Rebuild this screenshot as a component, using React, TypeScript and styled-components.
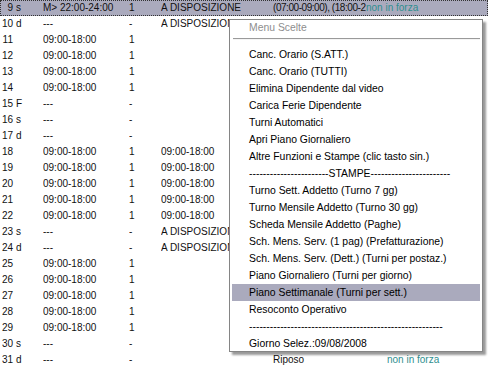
import styled, { createGlobalStyle } from "styled-components";

const Global = createGlobalStyle`
  html, body {
    margin: 0;
    padding: 0;
    background: #ffffff;
    overflow: hidden;
  }
  body {
    font-family: "Liberation Sans", Arial, sans-serif;
    font-size: 10px;
    color: #111111;
  }
`;

const Screen = styled.div`
  position: relative;
  width: 488px;
  height: 378px;
  overflow: hidden;
`;

const Table = styled.div`
  display: flex;
  flex-direction: column;
`;

const Row = styled.div<{ $selected?: boolean }>`
  display: grid;
  grid-template-columns: 41px 86px 32px 112px 93px 1fr;
  height: 16px;
  line-height: 16px;
  padding-left: 2px;
  box-sizing: border-box;
  background: ${(p) => (p.$selected ? "#aaaabd" : "transparent")};
  outline: ${(p) => (p.$selected ? "1px dotted #333" : "none")};
  outline-offset: -1px;
`;

const Cell = styled.div<{ $teal?: boolean; $indent?: number; $tight?: boolean }>`
  white-space: nowrap;
  overflow: hidden;
  min-width: 0;
  color: ${(p) => (p.$teal ? "#2f8f8f" : "inherit")};
  padding-left: ${(p) => p.$indent ?? 0}px;
  letter-spacing: ${(p) => (p.$tight ? "-0.45px" : "normal")};
`;

const DayNum = styled.span`
  display: inline-block;
  width: 11px;
  text-align: right;
`;

const DaySuffix = styled.span`
  margin-left: 3px;
`;

const Menu = styled.div`
  position: absolute;
  left: 229px;
  top: 19px;
  width: 254px;
  height: 333px;
  box-sizing: border-box;
  background: #ffffff;
  border: 1px solid #858585;
  box-shadow: 3px 3px 2px rgba(0, 0, 0, 0.4);
  display: flex;
  flex-direction: column;
  padding: 0 2px;
  font-size: 10.4px;
`;

const MenuTitle = styled.div`
  height: 15px;
  line-height: 15px;
  padding-left: 17px;
  color: #8e8e8e;
`;

const MenuRule = styled.div`
  height: 0;
  margin: 3px 0 6px 1px;
  border-top: 1px solid #9a9a9a;
  border-bottom: 1px solid #f4f4f4;
`;

const MenuItem = styled.div<{ $active?: boolean }>`
  height: 17px;
  line-height: 17px;
  padding-left: 17px;
  white-space: nowrap;
  color: #000000;
  background: ${(p) => (p.$active ? "#aaaabd" : "transparent")};
`;

type RowData = {
  n: string;
  s?: string;
  time: string;
  q: string;
  c4?: string;
  c5?: string;
  c6?: string;
  c6Indent?: number;
  sel?: boolean;
};

const rows: RowData[] = [
  { n: "9", s: "s", time: "M> 22:00-24:00", q: "1", c4: "A DISPOSIZIONE", c5: "(07:00-09:00), (18:00-2", c6: "non in forza", sel: true },
  { n: "10", s: "d", time: "---", q: "-", c4: "A DISPOSIZIONE" },
  { n: "11", time: "09:00-18:00", q: "1" },
  { n: "12", time: "09:00-18:00", q: "1" },
  { n: "13", time: "09:00-18:00", q: "1" },
  { n: "14", time: "09:00-18:00", q: "1" },
  { n: "15", s: "F", time: "---", q: "-" },
  { n: "16", s: "s", time: "---", q: "-" },
  { n: "17", s: "d", time: "---", q: "-" },
  { n: "18", time: "09:00-18:00", q: "1", c4: "09:00-18:00" },
  { n: "19", time: "09:00-18:00", q: "1", c4: "09:00-18:00" },
  { n: "20", time: "09:00-18:00", q: "1", c4: "09:00-18:00" },
  { n: "21", time: "09:00-18:00", q: "1", c4: "09:00-18:00" },
  { n: "22", time: "09:00-18:00", q: "1", c4: "09:00-18:00" },
  { n: "23", s: "s", time: "---", q: "-", c4: "A DISPOSIZIONE" },
  { n: "24", s: "d", time: "---", q: "-", c4: "A DISPOSIZIONE" },
  { n: "25", time: "09:00-18:00", q: "1" },
  { n: "26", time: "09:00-18:00", q: "1" },
  { n: "27", time: "09:00-18:00", q: "1" },
  { n: "28", time: "09:00-18:00", q: "1" },
  { n: "29", time: "09:00-18:00", q: "1" },
  { n: "30", s: "s", time: "---", q: "-" },
  { n: "31", s: "d", time: "---", q: "-", c5: "Riposo", c6: "non in forza", c6Indent: 21 },
];

const dashes = (n: number) => "-".repeat(n);

const menuItems = [
  "Canc. Orario (S.ATT.)",
  "Canc. Orario (TUTTI)",
  "Elimina Dipendente dal video",
  "Carica Ferie Dipendente",
  "Turni Automatici",
  "Apri Piano Giornaliero",
  "Altre Funzioni e Stampe (clic tasto sin.)",
  `${dashes(23)}STAMPE${dashes(23)}`,
  "Turno Sett. Addetto (Turno 7 gg)",
  "Turno Mensile Addetto (Turno 30 gg)",
  "Scheda Mensile Addetto (Paghe)",
  "Sch. Mens. Serv. (1 pag) (Prefatturazione)",
  "Sch. Mens. Serv. (Dett.) (Turni per postaz.)",
  "Piano Giornaliero (Turni per giorno)",
  "Piano Settimanale (Turni per sett.)",
  "Resoconto Operativo",
  dashes(56),
  "Giorno Selez.:09/08/2008",
];

export default function App() {
  return (
    <Screen>
      <Global />
      <Table>
        {rows.map((r) => (
          <Row key={r.n} $selected={r.sel}>
            <Cell>
              <DayNum>{r.n}</DayNum>
              {r.s && <DaySuffix>{r.s}</DaySuffix>}
            </Cell>
            <Cell>{r.time}</Cell>
            <Cell>{r.q}</Cell>
            <Cell>{r.c4}</Cell>
            <Cell $tight={r.sel}>{r.c5}</Cell>
            <Cell $teal $indent={r.c6Indent}>
              {r.c6}
            </Cell>
          </Row>
        ))}
      </Table>
      <Menu>
        <MenuTitle>Menu Scelte</MenuTitle>
        <MenuRule />
        {menuItems.map((label, i) => (
          <MenuItem key={i} $active={label.startsWith("Piano Settimanale")}>
            {label}
          </MenuItem>
        ))}
      </Menu>
    </Screen>
  );
}
